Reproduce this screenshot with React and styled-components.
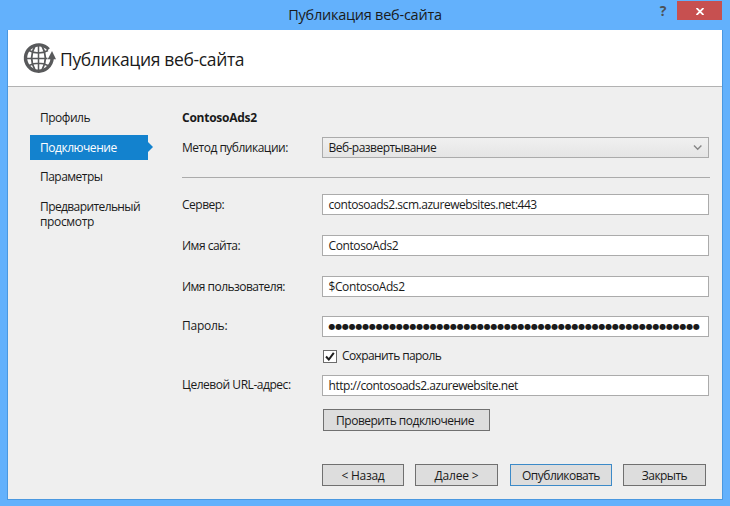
import React from "react";
import styled, { createGlobalStyle } from "styled-components";

const GlobalStyle = createGlobalStyle`
  *, *::before, *::after { box-sizing: border-box; }
  html, body { margin: 0; padding: 0; overflow: hidden; }
  body { font-family: "Open Sans", "Noto Sans", sans-serif; font-size: 12px; color: #1a1a1a; }
  button, input { font: inherit; color: inherit; }
`;

const Window = styled.div`
  width: 730px;
  height: 506px;
  background: #63b1fc;
  display: flex;
  flex-direction: column;
`;

const TitleBar = styled.header`
  height: 30px;
  display: grid;
  grid-template-columns: 1fr auto 1fr;
  align-items: start;
`;

const Title = styled.h1`
  grid-column: 2;
  margin: 0;
  font-size: 14.5px;
  font-weight: 400;
  line-height: 29px;
  letter-spacing: ${(p) => p.$ls}px;
  white-space: nowrap;
`;

const WindowControls = styled.div`
  display: flex;
  justify-content: flex-end;
  padding: 1px 8px 0 0;
`;

const HelpButton = styled.button`
  width: 28px;
  height: 19px;
  padding: 0;
  border: 0;
  background: none;
  color: #4c5157;
  font-size: 14px;
  font-weight: 700;
  line-height: 20px;
`;

const CloseButton = styled.button`
  width: 45px;
  height: 19px;
  padding: 2px 0 0 1px;
  border: 0;
  background: #c75050;
  display: flex;
  align-items: center;
  justify-content: center;
`;

const Client = styled.main`
  width: 716px;
  height: 470px;
  margin-left: 7px;
  border: 1px solid #4a98e0;
  border-top: 0;
  background: #efefef;
  display: flex;
  flex-direction: column;
`;

const Banner = styled.div`
  height: 57px;
  flex: none;
  background: #fff;
  border-bottom: 1px solid #b2b2b2;
  padding-left: 15px;
  display: flex;
  align-items: center;
`;

const BannerTitle = styled.h2`
  margin: 1px 0 0 4px;
  font-size: 17.5px;
  font-weight: 400;
  letter-spacing: ${(p) => p.$ls}px;
  white-space: nowrap;
`;

const Body = styled.div`
  flex: 1;
  display: grid;
  grid-template-columns: 174px 1fr;
`;

const Nav = styled.nav`
  padding: 18px 0 0 22px;
  display: flex;
  flex-direction: column;
`;

const NavItem = styled.a`
  width: 118px;
  height: 25px;
  margin-bottom: ${(p) => (p.$active ? 4 : 5)}px;
  padding-left: 10px;
  line-height: 25px;
  letter-spacing: ${(p) => p.$ls}px;
  white-space: nowrap;
  color: ${(p) => (p.$active ? "#fff" : "#1a1a1a")};
  background: ${(p) => (p.$active ? "#1382ce" : "transparent")};
  position: relative;

  &::after {
    content: "";
    display: ${(p) => (p.$active ? "block" : "none")};
    position: absolute;
    left: 118px;
    top: 7px;
    border: solid transparent;
    border-width: 5.5px 0 5.5px 5px;
    border-left-color: #1382ce;
  }
`;

const NavItemTall = styled(NavItem)`
  height: 40px;
  padding-top: 5px;
  line-height: 15px;
`;

const NavLine = styled.span`
  display: block;
  letter-spacing: ${(p) => p.$ls}px;
`;

const Form = styled.form`
  display: flex;
  flex-direction: column;
`;

const SiteName = styled.h3`
  margin: 21px 0 0;
  height: 19px;
  font-size: 12px;
  font-weight: 700;
  line-height: 20px;
  letter-spacing: ${(p) => p.$ls}px;
`;

const Row = styled.div`
  height: 21px;
  margin-top: ${(p) => p.$gap}px;
  display: grid;
  grid-template-columns: 140px 387px;
`;

const Label = styled.label`
  line-height: ${(p) => p.$lh || 21}px;
  letter-spacing: ${(p) => p.$ls}px;
  white-space: nowrap;
`;

const Field = styled.div`
  height: 21px;
  padding: 0 6px 0 5.5px;
  border: 1px solid #ababab;
  background: #fff;
  line-height: 19px;
  letter-spacing: ${(p) => p.$ls}px;
  white-space: nowrap;
  overflow: hidden;
`;

const Select = styled(Field)`
  display: flex;
  align-items: center;
  justify-content: space-between;
  background: linear-gradient(#f0f0f0, #e5e5e5);
`;

const Secret = styled(Field)`
  padding-right: 0;
  font-family: "DejaVu Sans", sans-serif;
  font-size: 8px;
`;

const Divider = styled.hr`
  width: 528px;
  height: 1px;
  margin: 19px 0 0;
  border: 0;
  background: #ababab;
`;

const CheckRow = styled.label`
  height: 20px;
  margin: 9px 0 0 141px;
  display: flex;
  align-items: center;
  line-height: 20px;
  letter-spacing: ${(p) => p.$ls}px;
`;

const CheckBox = styled.span`
  width: 14px;
  height: 13px;
  margin-right: 5px;
  border: 1px solid #6c6c6c;
  background: #fff;
  display: flex;
  align-items: center;
  justify-content: center;
`;

const Button = styled.button`
  width: ${(p) => p.$w}px;
  height: 22px;
  padding: 0;
  margin-left: ${(p) => (p.$primary ? 1 : 0)}px;
  flex: none;
  border: 1px solid ${(p) => (p.$primary ? "#3c8ac8" : "#707070")};
  background: #dddddd;
  line-height: 21px;
  letter-spacing: ${(p) => p.$ls}px;
  white-space: nowrap;
`;

const TestRow = styled.div`
  margin: 13px 0 0 141px;
  display: flex;

  ${Button} { padding-right: 3px; }
`;

const Actions = styled.div`
  margin: 33px 0 0 140px;
  display: flex;
  gap: 11px;
`;

const GlobeIcon = () => (
  <svg width="33" height="32" viewBox="0 0 33 32" fill="none" stroke="#58595b">
    <path d="M25.600 7.300A13.200 13.200 0 1 0 24 26.300Q29 22 29.200 16" strokeWidth="3.400" />
    <path d="M15.500 3v26M3 16.500h21.500M6 8.500q9.500 5 19 0M6 23.500q9.500-4.500 19 0" strokeWidth="1.500" />
    <path d="M12.200 3.500Q5 16 12.200 28.500M18.800 3.500Q26 16 18.800 28.500" strokeWidth="1.800" />
    <path d="M29 9l4 8.300h-8.300z" fill="#58595b" stroke="none" />
  </svg>
);

const fields = [
  { label: "Сервер:", value: "contosoads2.scm.azurewebsites.net:443", gap: 16, ls: -0.5, vls: -0.47 },
  { label: "Имя сайта:", value: "ContosoAds2", gap: 20, ls: -0.5, vls: -0.4 },
  { label: "Имя пользователя:", value: "$ContosoAds2", gap: 20, ls: -0.53, vls: -0.4 },
];

export default function App() {
  return (
    <>
      <GlobalStyle />
      <Window>
        <TitleBar>
          <Title $ls={-0.24}>Публикация веб-сайта</Title>
          <WindowControls>
            <HelpButton>?</HelpButton>
            <CloseButton aria-label="Закрыть окно">
              <svg width="8" height="7" viewBox="0 0 8 7" stroke="#fff" strokeWidth="1.8">
                <path d="M0.500 0l7 7M7.500 0l-7 7" />
              </svg>
            </CloseButton>
          </WindowControls>
        </TitleBar>
        <Client>
          <Banner>
            <GlobeIcon />
            <BannerTitle $ls={-0.35}>Публикация веб-сайта</BannerTitle>
          </Banner>
          <Body>
            <Nav>
              <NavItem $ls={-0.5}>Профиль</NavItem>
              <NavItem $active $ls={-0.47}>Подключение</NavItem>
              <NavItem $ls={-0.52}>Параметры</NavItem>
              <NavItemTall>
                <NavLine $ls={-0.6}>Предварительный</NavLine>
                <NavLine $ls={-0.35}>просмотр</NavLine>
              </NavItemTall>
            </Nav>
            <Form>
              <SiteName $ls={-0.25}>ContosoAds2</SiteName>
              <Row $gap={10}>
                <Label $ls={-0.5}>Метод публикации:</Label>
                <Select $ls={-0.53}>
                  Веб-развертывание
                  <svg width="9" height="6" viewBox="0 0 9 6" fill="none" stroke="#868686" strokeWidth="1.4">
                    <path d="M1 0.500l3.700 3.700L8.400 0.500" />
                  </svg>
                </Select>
              </Row>
              <Divider />
              {fields.map((f) => (
                <Row key={f.label} $gap={f.gap}>
                  <Label $ls={f.ls}>{f.label}</Label>
                  <Field $ls={f.vls}>{f.value}</Field>
                </Row>
              ))}
              <Row $gap={19}>
                <Label $lh={20} $ls={-0.25}>Пароль:</Label>
                <Secret $ls={-0.23}>{"●".repeat(55)}</Secret>
              </Row>
              <CheckRow $ls={-0.6}>
                <CheckBox>
                  <svg width="10" height="9" viewBox="0 0 10 9" fill="none" stroke="#1e1e1e" strokeWidth="2">
                    <path d="M1 4.500l2.800 3L8.800 0.800" />
                  </svg>
                </CheckBox>
                Сохранить пароль
              </CheckRow>
              <Row $gap={9}>
                <Label $lh={20} $ls={-0.46}>Целевой URL-адрес:</Label>
                <Field $ls={-0.47}>http://contosoads2.azurewebsite.net</Field>
              </Row>
              <TestRow>
                <Button type="button" $w={167} $ls={-0.5}>Проверить подключение</Button>
              </TestRow>
              <Actions>
                <Button type="button" $w={82} $ls={-0.3}>&lt; Назад</Button>
                <Button type="button" $w={83} $ls={-0.2}>Далее &gt;</Button>
                <Button type="button" $w={102} $primary $ls={-0.52}>Опубликовать</Button>
                <Button type="button" $w={83} $ls={-0.55}>Закрыть</Button>
              </Actions>
            </Form>
          </Body>
        </Client>
      </Window>
    </>
  );
}
